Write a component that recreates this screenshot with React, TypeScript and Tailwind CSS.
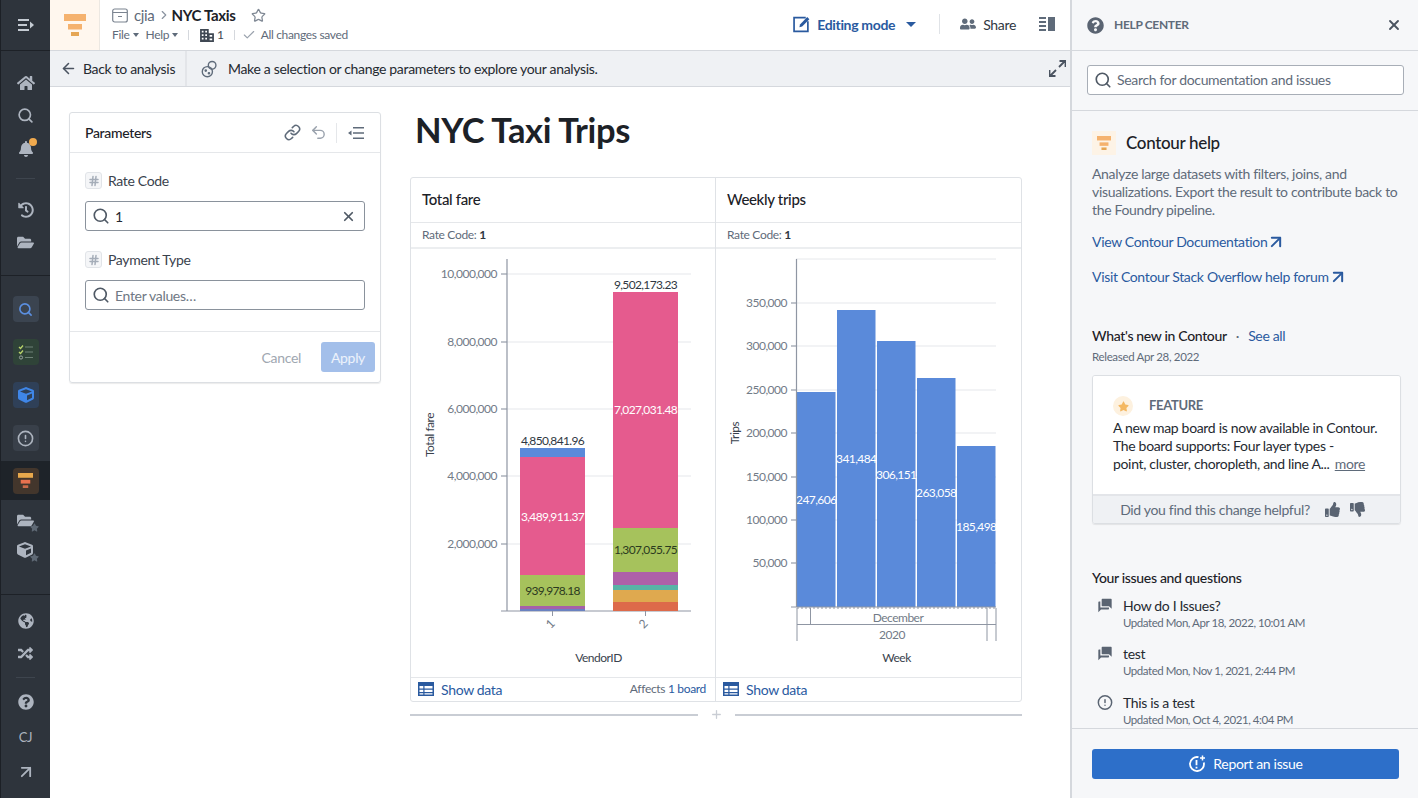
import React from 'react';
import { ArrowLeft, ArrowUpRight, Check, ChevronRight, Link, Search, Star, Undo2, X, AlertCircle, Hash, Plus } from 'lucide-react';
import { FaBell, FaCube, FaFolderOpen, FaGlobeAmericas, FaHistory, FaHome, FaQuestionCircle, FaRandom, FaThumbsDown, FaThumbsUp, FaUserFriends, FaStar } from 'react-icons/fa';
import { MdQuestionAnswer } from 'react-icons/md';

const ContourLogo = ({ size = 22, a = '#f5b26e', b = '#f5b26e', c = '#e5a654' }: { size?: number; a?: string; b?: string; c?: string }) => (
  <svg width={size} height={size} viewBox="0 0 22 22">
    <rect x="0" y="0" width="22" height="7" fill={a} />
    <rect x="4" y="10" width="14" height="5.5" fill={b} />
    <rect x="7" y="18" width="8" height="4" fill={c} />
  </svg>
);

const MenuIcon = () => (
  <svg width="18" height="14" viewBox="0 0 18 14" fill="none" stroke="#c5cbd3" strokeWidth="2">
    <path d="M1 2h11M1 7h9M1 12h11" />
    <path d="M13 3.5 17 7l-4 3.5z" fill="#c5cbd3" stroke="none" />
  </svg>
);

const TasksIcon = () => (
  <svg width="16" height="16" viewBox="0 0 16 16" fill="none">
    <path d="M1 3l1.5 1.5L5 1.5M1 8l1.5 1.5L5 6.5" stroke="#b9d36b" strokeWidth="1.3" />
    <circle cx="3" cy="13.5" r="1.6" stroke="#9aa5a0" />
    <path d="M7 3h8M7 8h8M7 13.5h8" stroke="#6f8277" strokeWidth="1.2" />
  </svg>
);

const ExpandIcon = () => (
  <svg width="17" height="17" viewBox="0 0 17 17" fill="none" stroke="#4a5360" strokeWidth="1.8">
    <path d="M10 7l5.5-5.5M10.5 1h6v6" />
    <path d="M7 10l-5.5 5.5M6.5 16h-6v-6" />
  </svg>
);

const BuildingIcon = () => (
  <svg width="14" height="13" viewBox="0 0 16 15">
    <path fillRule="evenodd" fill="#3f4853" d="M0 0h10v5h6v10H0zM2 2v2h2V2zM6 2v2h2V2zM2 6v2h2V6zM6 6v2h2V6zM2 10v2h2v-2zM6 10v2h2v-2zM11 7v2h3V7zM11 11v2h3v-2z" />
  </svg>
);

const ReportIcon = () => (
  <svg width="18" height="18" viewBox="0 0 18 18" fill="none" stroke="#fff" strokeWidth="1.8">
    <path d="M10.5 2.2A7 7 0 1 0 15.8 7.5" />
    <path d="M8.5 5v5.2M8.5 11.8v1.8" />
    <path d="M14.5 0.5v5M12 3h5" strokeWidth="1.5" />
  </svg>
);

const SideItem = ({ children }: { children: React.ReactNode }) => (
  <div className="h-[33px] flex items-center justify-center text-[#adb4bf]">{children}</div>
);

const Tile = ({ className, children }: { className: string; children: React.ReactNode }) => (
  <div className={`w-[26px] h-[26px] rounded-sm flex items-center justify-center ${className}`}>{children}</div>
);

const WithStar = ({ children }: { children: React.ReactNode }) => (
  <div className="relative w-[18px] h-[17px] text-[#adb4bf]">
    {children}
    <FaStar size={9} className="absolute -right-[4px] -bottom-[3px] text-[#5e6874]" />
  </div>
);

const Sidebar = () => (
  <aside className="w-[50px] shrink-0 h-full bg-[#2e343c] border-l border-[#1c2026] flex flex-col">
    <div className="h-[51px] shrink-0 border-b border-[#1d2127] flex items-center justify-center"><MenuIcon /></div>
    <div className="pt-[15px] flex flex-col">
      <SideItem><FaHome size={18} /></SideItem>
      <SideItem><Search size={17} strokeWidth={2.4} /></SideItem>
      <SideItem>
        <div className="relative">
          <FaBell size={16} />
          <span className="absolute -top-[3px] -right-[3px] w-[8px] h-[8px] rounded-full bg-[#f0a94e]" />
        </div>
      </SideItem>
      <div className="mt-[13px] mx-[15px] h-px bg-[#3e454e]" />
      <div className="mt-[14px]"><SideItem><FaHistory size={16} /></SideItem></div>
      <SideItem><FaFolderOpen size={17} /></SideItem>
    </div>
    <div className="mt-[16px] h-px bg-[#1d2127]" />
    <div className="pt-[20px] flex flex-col items-center gap-[17px]">
      <Tile className="bg-[#3b4450]"><Search size={15} strokeWidth={2.6} className="text-[#5b8fe0]" /></Tile>
      <Tile className="bg-[#2f4338]"><TasksIcon /></Tile>
      <Tile className="bg-[#2f4058]"><FaCube size={16} className="text-[#3f86e8]" /></Tile>
      <Tile className="bg-[#39404a]"><AlertCircle size={17} strokeWidth={2.3} className="text-[#adb4bf]" /></Tile>
    </div>
    <div className="mt-[10px] h-[39px] bg-[#1e2329] flex items-center justify-center">
      <Tile className="bg-[#43362c]"><ContourLogo size={15} a="#e8a84c" b="#e8714f" c="#c96a4a" /></Tile>
    </div>
    <div className="mt-[4px] flex flex-col items-center">
      <div className="h-[33px] flex items-center"><WithStar><FaFolderOpen size={17} /></WithStar></div>
      <div className="h-[26px] flex items-center"><WithStar><FaCube size={16} /></WithStar></div>
    </div>
    <div className="mt-[31px] h-px bg-[#1d2127]" />
    <div className="pt-[9px] flex flex-col">
      <SideItem><FaGlobeAmericas size={16} /></SideItem>
      <SideItem><FaRandom size={15} /></SideItem>
      <div className="mt-[7px] mx-[15px] h-px bg-[#3e454e]" />
      <div className="mt-[7px]"><SideItem><FaQuestionCircle size={16} /></SideItem></div>
      <div className="h-[37px] pt-[2px] flex items-center justify-center text-[13px] text-[#adb4bf]">CJ</div>
      <SideItem><ArrowUpRight size={20} strokeWidth={2.2} /></SideItem>
    </div>
  </aside>
);

const Caret = ({ className = 'border-t-[#5f6b7a]', wide }: { className?: string; wide?: boolean }) => (
  <span className={`inline-block w-0 h-0 border-x-transparent ${wide ? 'border-x-[5px] border-t-[5px]' : 'border-x-[3.5px] border-t-[4px]'} ${className}`} />
);

const TopBar = () => (
  <header className="h-[51px] shrink-0 border-b border-[#d5d8dd] flex bg-white">
    <div className="w-[50px] shrink-0 bg-[#fff7ee] border-r border-[#ece8e2] flex items-center justify-center"><ContourLogo /></div>
    <div className="pl-[12px] pt-[5px] flex flex-col">
      <div className="flex items-center h-[20px]">
        <svg width="16" height="15" viewBox="0 0 16 15" fill="none" stroke="#7b8490" strokeWidth="1.2">
          <rect x="0.7" y="1" width="14.6" height="13" rx="2" />
          <path d="M1 4.5h14M6 8.5h4" />
        </svg>
        <span className="ml-[6px] text-[15px] text-[#5f6b7a]">cjia</span>
        <ChevronRight size={14} className="ml-[2px] text-[#8a93a0]" />
        <span className="ml-[1px] text-[15px] font-bold text-[#1c2127]">NYC Taxis</span>
        <Star size={15} className="ml-[16px] text-[#7f8894]" />
      </div>
      <div className="flex items-center h-[20px] text-[12px] text-[#5f6b7a]">
        <span>File</span><span className="ml-[3px] mr-[7px] flex"><Caret /></span>
        <span>Help</span><span className="ml-[3px] flex"><Caret /></span>
        <span className="ml-[10px] mr-[11px] w-px h-[10px] bg-[#d5d8dd]" />
        <BuildingIcon />
        <span className="ml-[3px] text-[#3f4853]">1</span>
        <span className="ml-[10px] mr-[7px] w-px h-[10px] bg-[#d5d8dd]" />
        <Check size={14} className="text-[#9aa2ad]" />
        <span className="ml-[5px]">All changes saved</span>
      </div>
    </div>
    <div className="ml-auto pb-[2px] flex items-center">
      <svg width="17" height="17" viewBox="0 0 16 16" fill="none" stroke="#2a5a9f" strokeWidth="1.6">
        <path d="M12 1.5H1v13h13V5" />
        <path d="M6 10.5l.6-2.6L13.4 1l2 2-6.8 6.9z" fill="#2a5a9f" stroke="none" />
      </svg>
      <span className="ml-[7px] text-[14px] font-bold text-[#2a5a9f]">Editing mode</span>
      <span className="ml-[11px] flex"><Caret wide className="border-t-[#2a5a9f]" /></span>
      <span className="ml-[23px] w-px h-[20px] bg-[#e0e3e7]" />
      <FaUserFriends size={16} className="ml-[20px] text-[#5f6b7a]" />
      <span className="ml-[7px] text-[14px] text-[#2f3742]">Share</span>
      <svg className="ml-[23px] mr-[15px]" width="16" height="14" viewBox="0 0 16 14" fill="#5f6b7a">
        <path d="M0 0h7v2H0zM0 4h7v2H0zM0 8h7v2H0zM0 12h7v2H0zM9 0h7v14H9z" />
      </svg>
    </div>
  </header>
);

const SubBar = () => (
  <div className="h-[36px] shrink-0 bg-[#eff1f4] border-b border-[#d5d8dd] flex items-center text-[14px] text-[#252a31]">
    <div className="w-[137px] h-full shrink-0 border-r-2 border-[#e3e5e9] flex items-center pl-[10px]">
      <ArrowLeft size={17} strokeWidth={2.2} className="text-[#4a5360]" />
      <span className="ml-[6px]">Back to analysis</span>
    </div>
    <svg className="ml-[14px]" width="18" height="18" viewBox="0 0 17 17" fill="none" stroke="#5f6b7a" strokeWidth="1.3">
      <circle cx="10.5" cy="5" r="3.6" />
      <circle cx="6" cy="11" r="4.8" />
      <circle cx="4.5" cy="10" r="0.6" fill="#5f6b7a" /><circle cx="7.5" cy="12.5" r="0.6" fill="#5f6b7a" />
    </svg>
    <span className="ml-[9px]">Make a selection or change parameters to explore your analysis.</span>
    <span className="ml-auto mr-[4px] flex"><ExpandIcon /></span>
  </div>
);

const Param = ({ label, value, placeholder }: { label: string; value?: string; placeholder?: string }) => (
  <div>
    <div className="flex items-center">
      <span className="w-[17px] h-[17px] rounded-[3px] border border-[#e1e4e8] bg-[#f5f6f8] flex items-center justify-center">
        <Hash size={12} strokeWidth={3} className="text-[#a5adb8]" />
      </span>
      <span className="ml-[6px] text-[14px] text-[#3a424d]">{label}</span>
    </div>
    <div className="mt-[10px] h-[30px] rounded-[3px] border border-[#8a929c] flex items-center pl-[6px] pr-[8px]">
      <Search size={18} strokeWidth={2.2} className="text-[#4f5965]" />
      <span className={`ml-[5px] text-[14px] ${value ? 'text-[#252a31]' : 'text-[#6f7884]'}`}>{value ?? placeholder}</span>
      {value && <X size={15} strokeWidth={2.8} className="ml-auto text-[#4f5965]" />}
    </div>
  </div>
);

const ParametersCard = () => (
  <section className="w-[312px] h-[271px] shrink-0 rounded-[3px] border border-[#dcdfe3] shadow-[0_1px_1px_rgba(0,0,0,0.08)] flex flex-col">
    <div className="h-[40px] shrink-0 border-b border-[#e5e7ea] flex items-center pl-[15px] pr-[16px]">
      <span className="text-[14px] font-medium text-[#1c2127]">Parameters</span>
      <Link size={17} strokeWidth={2.2} className="ml-auto text-[#5f6b7a]" />
      <Undo2 size={17} strokeWidth={2} className="ml-[9px] text-[#9aa2ad]" />
      <span className="ml-[9px] w-px h-[20px] bg-[#e5e7ea]" />
      <svg className="ml-[11px]" width="16" height="12" viewBox="0 0 16 12" fill="#5f6b7a">
        <path d="M5 0h11v1.6H5zM5 5.2h11v1.6H5zM5 10.4h11V12H5zM0 6l3.5-2.6v5.2z" />
      </svg>
    </div>
    <div className="flex-1 pt-[17px] px-[15px] flex flex-col gap-[18px]">
      <Param label="Rate Code" value="1" />
      <Param label="Payment Type" placeholder="Enter values…" />
    </div>
    <div className="h-[51px] shrink-0 border-t border-[#e5e7ea] flex items-center justify-end pr-[5px] text-[14px]">
      <span className="text-[#a0a7b1]">Cancel</span>
      <span className="ml-[20px] w-[54px] h-[30px] rounded-[3px] bg-[#a3bfea] text-white/80 flex items-center justify-center">Apply</span>
    </div>
  </section>
);

const grid = '#e6e8eb';
const axis = '#8f96a3';
const tick = '#727b87';

const FareChart = () => (
  <svg width="304" height="428" viewBox="411 249 304 428" className="block tracking-[-0.5px]" fontSize="12">
    {[[274, '10,000,000'], [342, '8,000,000'], [409, '6,000,000'], [476, '4,000,000'], [544, '2,000,000']].map(([y, t]) => (
      <g key={t as string}>
        <path d={`M501 ${y}H691`} stroke={grid} strokeWidth="1.2" />
        <path d={`M501 ${y}H507`} stroke={axis} />
        <text x="497" y={(y as number) + 4} textAnchor="end" fill={tick}>{t}</text>
      </g>
    ))}
    <path d="M507 259V611H691M501 611H507" stroke={axis} strokeWidth="1.2" fill="none" />
    <rect x="520" y="448" width="65" height="9" fill="#5a8ada" />
    <rect x="520" y="457" width="65" height="118" fill="#e55b8e" />
    <rect x="520" y="575" width="65" height="31" fill="#a6c25c" />
    <rect x="520" y="606" width="65" height="3" fill="#a561a8" />
    <rect x="520" y="609" width="65" height="2" fill="#6a82c0" />
    <rect x="613" y="292" width="65" height="236" fill="#e55b8e" />
    <rect x="613" y="528" width="65" height="44" fill="#a6c25c" />
    <rect x="613" y="572" width="65" height="13" fill="#ae60a8" />
    <rect x="613" y="585" width="65" height="5" fill="#58b3a6" />
    <rect x="613" y="590" width="65" height="12" fill="#dfa94f" />
    <rect x="613" y="602" width="65" height="9" fill="#dd6a4a" />
    <g textAnchor="middle" className="tracking-[-0.65px]">
      <text x="552.5" y="445" fill="#2f3742">4,850,841.96</text>
      <text x="552.5" y="521" fill="#fff">3,489,911.37</text>
      <text x="552.5" y="595" fill="#2c3a20">939,978.18</text>
      <text x="645.5" y="289" fill="#2f3742">9,502,173.23</text>
      <text x="645.5" y="414" fill="#fff">7,027,031.48</text>
      <text x="645.5" y="554" fill="#2c3a20">1,307,055.75</text>
    </g>
    <path d="M552.5 611v5M645.5 611v5" stroke={axis} />
    <text x="0" y="0" transform="translate(553 627) rotate(-45)" textAnchor="middle" fill={tick}>1</text>
    <text x="0" y="0" transform="translate(646 627) rotate(-45)" textAnchor="middle" fill={tick}>2</text>
    <text x="598.5" y="662" textAnchor="middle" fill="#3a424d">VendorID</text>
    <text x="0" y="0" transform="translate(434 435) rotate(-90)" textAnchor="middle" fill="#3a424d">Total fare</text>
  </svg>
);

const tripBars = [
  { x: 797, top: 392, label: '247,606', ly: 504 },
  { x: 837, top: 310, label: '341,484', ly: 463 },
  { x: 877, top: 341, label: '306,151', ly: 479 },
  { x: 917, top: 378, label: '263,058', ly: 497 },
  { x: 957, top: 446, label: '185,498', ly: 531 },
];

const TripsChart = () => (
  <svg width="305" height="428" viewBox="716 249 305 428" className="block tracking-[-0.5px]" fontSize="12">
    <path d="M796 259H996" stroke={grid} />
    {[[303, '350,000'], [346, '300,000'], [390, '250,000'], [433, '200,000'], [477, '150,000'], [520, '100,000'], [563, '50,000']].map(([y, t]) => (
      <g key={t as string}>
        <path d={`M791 ${y}H996`} stroke={grid} strokeWidth="1.2" />
        <path d={`M791 ${y}H797`} stroke={axis} />
        <text x="787" y={(y as number) + 4} textAnchor="end" fill={tick}>{t}</text>
      </g>
    ))}
    {tripBars.map(b => (
      <g key={b.x}>
        <rect x={b.x} y={b.top} width="38.5" height={607 - b.top} fill="#5a8ada" />
        <text x={b.x + 19.25} y={b.ly} textAnchor="middle" fill="#fff" className="tracking-[-0.6px]">{b.label}</text>
      </g>
    ))}
    <path d="M791 607H996" stroke={axis} />
    <path d="M796.5 259V607" stroke={axis} strokeWidth="1.2" />
    <path d="M797 608H996" stroke={axis} strokeDasharray="2 2" />
    <path d="M797 608V641M810.5 608V624.5M987 608V641M996 608V641M797 624.5H996" stroke={axis} fill="none" />
    <text x="898" y="622" textAnchor="middle" fill={tick}>December</text>
    <text x="892" y="639" textAnchor="middle" fill={tick}>2020</text>
    <text x="896.5" y="662" textAnchor="middle" fill="#3a424d">Week</text>
    <text x="0" y="0" transform="translate(739 433) rotate(-90)" textAnchor="middle" fill="#3a424d">Trips</text>
  </svg>
);

const TableIcon = () => (
  <svg width="16" height="14" viewBox="0 0 16 14">
    <path fillRule="evenodd" fill="#2a5a9f" d="M0 0h16v14H0zM1.5 4v2.5h3.8V4zM6.5 4v2.5h8V4zM1.5 7.7v2.4h3.8V7.7zM6.5 7.7v2.4h8V7.7zM1.5 11.2v1.4h3.8v-1.4zM6.5 11.2v1.4h8v-1.4z" />
  </svg>
);

const ChartCell = ({ title, chart, extra, border }: { title: string; chart: React.ReactNode; extra?: React.ReactNode; border?: boolean }) => (
  <div className={`w-[305px] flex flex-col ${border ? 'border-r border-[#dfe2e6]' : ''}`}>
    <div className="h-[45px] border-b border-[#e5e7ea] flex items-center pl-[11px] pb-[2px] text-[15px] font-medium text-[#1c2127]">{title}</div>
    <div className="h-[26px] border-b-2 border-[#eceef0] flex items-center pl-[11px] text-[12px] text-[#5f6b7a]">Rate Code:&nbsp;<b className="font-bold text-[#2f3742]">1</b></div>
    {chart}
    <div className="h-[24px] border-t border-[#e5e7ea] flex items-center pl-[7px] pr-[9px] pb-[1px]">
      <TableIcon />
      <span className="ml-[7px] text-[14px] text-[#2a5a9f]">Show data</span>
      {extra}
    </div>
  </div>
);

const Board = () => (
  <div className="pl-[29px] flex-1">
    <h1 className="pl-[5px] mt-[21px] h-[44px] flex items-center text-[34.5px] font-bold text-[#1c2127]">NYC Taxi Trips</h1>
    <div className="mt-[25px] w-[612px] rounded-[3px] border border-[#dfe2e6] flex">
      <ChartCell
        title="Total fare"
        border
        chart={<FareChart />}
        extra={<span className="ml-auto text-[12px] text-[#5f6b7a]">Affects <span className="text-[#2a5a9f]">1 board</span></span>}
      />
      <ChartCell title="Weekly trips" chart={<TripsChart />} />
    </div>
    <div className="mt-[6px] w-[612px] flex items-center">
      <div className="flex-1 h-[2px] bg-[#c9cdd4]" />
      <Plus size={13} strokeWidth={2.4} className="mx-[12px] text-[#c9cdd4]" />
      <div className="flex-1 h-[2px] bg-[#c9cdd4]" />
    </div>
  </div>
);

const HelpLink = ({ text }: { text: string }) => (
  <div className="flex items-center text-[14px] text-[#2a5a9f]">
    {text}
    <ArrowUpRight size={20} strokeWidth={2.4} className="-ml-[1px]" />
  </div>
);

const IssueRow = ({ icon, title, sub }: { icon: React.ReactNode; title: string; sub: string }) => (
  <div className="flex h-[48.5px]">
    <div className="w-[16px] h-[20px] flex items-center ml-[5px]">{icon}</div>
    <div className="ml-[10px]">
      <div className="h-[20px] flex items-center text-[14px] text-[#252a31]">{title}</div>
      <div className="h-[15px] flex items-center text-[11.5px] tracking-[-0.45px] text-[#5f6b7a]">{sub}</div>
    </div>
  </div>
);

const HelpPanel = () => (
  <aside className="w-[348px] shrink-0 h-full bg-[#f6f7f9] border-l-2 border-[#d5d8dd] flex flex-col">
    <div className="h-[51px] shrink-0 border-b border-[#d5d8dd] flex items-center pl-[15px] pr-[16px]">
      <FaQuestionCircle size={17} className="text-[#5a6472]" />
      <span className="ml-[10px] text-[12px] font-bold text-[#5f6b7a]">HELP CENTER</span>
      <X size={16} strokeWidth={2.8} className="ml-auto text-[#4a5360]" />
    </div>
    <div className="h-[60px] shrink-0 border-b border-[#d5d8dd] flex items-center pl-[15px] pr-[14px] pb-[1px]">
      <div className="w-full h-[30px] rounded-[3px] bg-white border border-[#a8aeb7] flex items-center pl-[6px]">
        <Search size={18} strokeWidth={2.2} className="text-[#4f5965]" />
        <span className="ml-[5px] pb-[1px] text-[14px] text-[#5f6b7a]">Search for documentation and issues</span>
      </div>
    </div>
    <div className="flex-1 min-h-0 overflow-hidden pl-[20px] pr-[18px]">
      <div className="mt-[20px] flex items-center h-[24px]">
        <span className="w-[24px] h-[24px] bg-[#fdf3e6] flex items-center justify-center"><ContourLogo size={14} /></span>
        <span className="ml-[10px] text-[17px] font-medium text-[#1c2127]">Contour help</span>
      </div>
      <p className="mt-[10px] text-[14px] leading-[18px] text-[#5f6b7a]">Analyze large datasets with filters, joins, and visualizations. Export the result to contribute back to the Foundry pipeline.</p>
      <div className="mt-[12px] flex flex-col gap-[14px]">
        <HelpLink text="View Contour Documentation" />
        <HelpLink text="Visit Contour Stack Overflow help forum" />
      </div>
      <div className="mt-[39px] h-[18px] flex items-center text-[14px]">
        <span className="font-medium text-[#1c2127]">What's new in Contour</span>
        <span className="mx-[9px] text-[#5f6b7a]">·</span>
        <span className="text-[14px] text-[#2a5a9f]">See all</span>
      </div>
      <div className="mt-[6px] text-[11.5px] leading-[14px] text-[#5f6b7a]">Released Apr 28, 2022</div>
      <div className="mt-[11px] w-[309px] h-[149px] rounded-[3px] border border-[#dcdfe3] flex flex-col overflow-hidden shadow-[0_1px_1px_rgba(0,0,0,0.08)]">
        <div className="flex-1 bg-white pl-[20px] pr-[6px] pt-[18px]">
          <div className="flex items-center h-[24px]">
            <span className="w-[20px] h-[20px] rounded-full bg-[#fdf1df] flex items-center justify-center"><FaStar size={11} className="text-[#f4b862]" /></span>
            <span className="ml-[16px] text-[13px] font-bold text-[#5f6b7a]">FEATURE</span>
          </div>
          <p className="mt-[1px] text-[14px] leading-[18px] text-[#252a31] whitespace-nowrap">A new map board is now available in Contour.<br />The board supports: Four layer types -<br />point, cluster, choropleth, and line A... <span className="ml-[2px] text-[#5f6b7a] underline">more</span></p>
        </div>
        <div className="h-[29px] shrink-0 bg-[#eff1f4] border-t-2 border-[#e3e5e9] flex items-center justify-center pr-[8px] text-[14px] text-[#5f6b7a]">
          Did you find this change helpful?
          <FaThumbsUp size={15} className="ml-[15px] text-[#5a6472]" />
          <FaThumbsDown size={15} className="ml-[10px] text-[#5a6472]" />
        </div>
      </div>
      <div className="mt-[44px] h-[18px] flex items-center text-[14px] font-medium text-[#1c2127]">Your issues and questions</div>
      <div className="mt-[9px]">
        <IssueRow icon={<MdQuestionAnswer size={19} className="text-[#5a6472] -scale-x-100" />} title="How do I Issues?" sub="Updated Mon, Apr 18, 2022, 10:01 AM" />
        <IssueRow icon={<MdQuestionAnswer size={19} className="text-[#5a6472] -scale-x-100" />} title="test" sub="Updated Mon, Nov 1, 2021, 2:44 PM" />
        <IssueRow icon={<AlertCircle size={17} strokeWidth={2.2} className="text-[#5a6472]" />} title="This is a test" sub="Updated Mon, Oct 4, 2021, 4:04 PM" />
      </div>
    </div>
    <div className="h-[70px] shrink-0 border-t border-[#d5d8dd] flex items-center pl-[20px] pr-[19px]">
      <div className="w-full h-[30px] rounded-[3px] bg-[#2d6fc9] flex items-center justify-center text-[14px] text-white">
        <ReportIcon />
        <span className="ml-[7px]">Report an issue</span>
      </div>
    </div>
  </aside>
);

export default function App() {
  return (
    <div className="w-[1418px] h-[798px] overflow-hidden flex bg-white [font-family:Lato,sans-serif] tracking-[-0.33px]">
      <Sidebar />
      <main className="flex-1 min-w-0 h-full flex flex-col">
        <TopBar />
        <SubBar />
        <div className="flex-1 flex pl-[19px]">
          <div className="pt-[25px]"><ParametersCard /></div>
          <Board />
        </div>
      </main>
      <HelpPanel />
    </div>
  );
}
